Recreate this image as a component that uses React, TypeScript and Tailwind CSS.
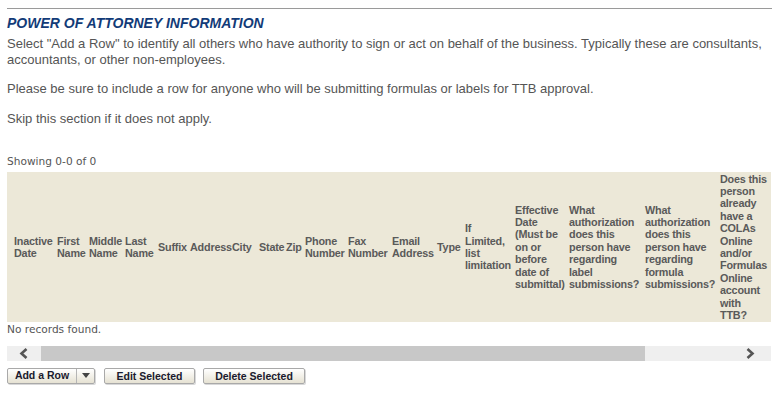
import React from 'react';

// column header lines plus the fixed width of each column
const headers: { lines: string[]; w: string }[] = [
  { lines: ['Inactive', 'Date'], w: 'w-[50px] pl-[7px]' },
  { lines: ['First', 'Name'], w: 'w-[32px]' },
  { lines: ['Middle', 'Name'], w: 'w-[36px]' },
  { lines: ['Last', 'Name'], w: 'w-[33px]' },
  { lines: ['Suffix'], w: 'w-[32px]' },
  { lines: ['Address'], w: 'w-[42px]' },
  { lines: ['City'], w: 'w-[27px]' },
  { lines: ['State'], w: 'w-[27px]' },
  { lines: ['Zip'], w: 'w-[19px]' },
  { lines: ['Phone', 'Number'], w: 'w-[43px]' },
  { lines: ['Fax', 'Number'], w: 'w-[44px]' },
  { lines: ['Email', 'Address'], w: 'w-[45px]' },
  { lines: ['Type'], w: 'w-[28px]' },
  { lines: ['If', 'Limited,', 'list', 'limitation'], w: 'w-[50px]' },
  { lines: ['Effective', 'Date', '(Must be', 'on or', 'before', 'date of', 'submittal)'], w: 'w-[54px]' },
  { lines: ['What', 'authorization', 'does this', 'person have', 'regarding', 'label', 'submissions?'], w: 'w-[76px]' },
  { lines: ['What', 'authorization', 'does this', 'person have', 'regarding', 'formula', 'submissions?'], w: 'w-[75px]' },
  {
    lines: ['Does this', 'person', 'already', 'have a', 'COLAs', 'Online', 'and/or', 'Formulas', 'Online', 'account', 'with', 'TTB?'],
    w: 'w-[100px]',
  },
];

const Button: React.FC<{ label: string; className?: string }> = ({ label, className }) => (
  <button
    className={
      'h-[16px] border border-[#a9a9a9] rounded-[2px] bg-gradient-to-b from-[#ffffff] to-[#e6e2d3] text-[10.5px] font-bold text-[#1a1a2e] leading-none shadow-[1px_1px_0_#d8d8d8] ' +
      (className ?? '')
    }
  >
    {label}
  </button>
);

export default function App() {
  return (
    <div className="w-[777px] h-[405px] bg-white pl-[7px] pr-[5px] pt-[8px] font-['Liberation_Sans',Arial,sans-serif] text-[#555555]">
      <div className="border-t border-[#9a9a9a]" />
      <h2 className="mt-[6px] text-[14px] leading-[17px] font-bold italic text-[#123b78]">
        POWER OF ATTORNEY INFORMATION
      </h2>
      <p className="mt-[4px] text-[13px] leading-[16px]">
        Select "Add a Row" to identify all others who have authority to sign or act on behalf of the business. Typically these are consultants, accountants, or other non-employees.
      </p>
      <p className="mt-[13px] text-[13px] leading-[16px]">
        Please be sure to include a row for anyone who will be submitting formulas or labels for TTB approval.
      </p>
      <p className="mt-[14px] text-[13px] leading-[16px]">Skip this section if it does not apply.</p>

      <div className="mt-[28px] font-['DejaVu_Sans',Verdana,sans-serif] text-[10.6px] leading-[13px] text-[#555555]">
        Showing 0-0 of 0
      </div>

      <div className="mt-[4px] w-[764px] overflow-hidden">
        <table className="table-fixed w-[813px] border-collapse bg-[#ece8d8]">
          <thead>
            <tr className="h-[150px]">
              {headers.map((h, i) => (
                <th
                  key={i}
                  className={
                    'align-middle text-left font-bold text-[10.8px] tracking-[-0.2px] leading-[12.4px] text-[#5a5a5a] whitespace-nowrap p-0 ' +
                    h.w
                  }
                >
                  {h.lines.map((l, j) => (
                    <div key={j}>{l}</div>
                  ))}
                </th>
              ))}
            </tr>
          </thead>
        </table>
      </div>

      <div className="mt-[1px] font-['DejaVu_Sans',Verdana,sans-serif] text-[10.6px] leading-[13px] text-[#555555]">
        No records found.
      </div>

      <div className="mt-[10px] w-[764px] h-[15px] flex bg-[#efefef]">
        <div className="w-[34px] flex items-center justify-center">
          <svg width="10" height="11" viewBox="0 0 10 11">
            <path d="M7.5 1 L2.5 5.5 L7.5 10" stroke="#555" strokeWidth="2.6" fill="none" />
          </svg>
        </div>
        <div className="w-[604px] bg-[#c8c8c8]" />
        <div className="flex-1 flex items-center justify-end pr-[16px]">
          <svg width="10" height="11" viewBox="0 0 10 11">
            <path d="M2.5 1 L7.5 5.5 L2.5 10" stroke="#555" strokeWidth="2.6" fill="none" />
          </svg>
        </div>
      </div>

      <div className="mt-[7px] flex items-center">
        <div className="h-[16px] flex border border-[#a9a9a9] rounded-[2px] bg-gradient-to-b from-[#ffffff] to-[#e6e2d3] shadow-[1px_1px_0_#d8d8d8]">
          <span className="w-[68px] flex items-center justify-center text-[10.5px] font-bold text-[#1a1a2e]">Add a Row</span>
          <span className="w-[18px] flex items-center justify-center border-l border-[#b5b5b5]">
            <svg width="8" height="6" viewBox="0 0 8 6">
              <path d="M0 0 H8 L4 5 Z" fill="#444" />
            </svg>
          </span>
        </div>
        <Button label="Edit Selected" className="ml-[9px] w-[91px]" />
        <Button label="Delete Selected" className="ml-[8px] w-[102px]" />
      </div>
    </div>
  );
}
